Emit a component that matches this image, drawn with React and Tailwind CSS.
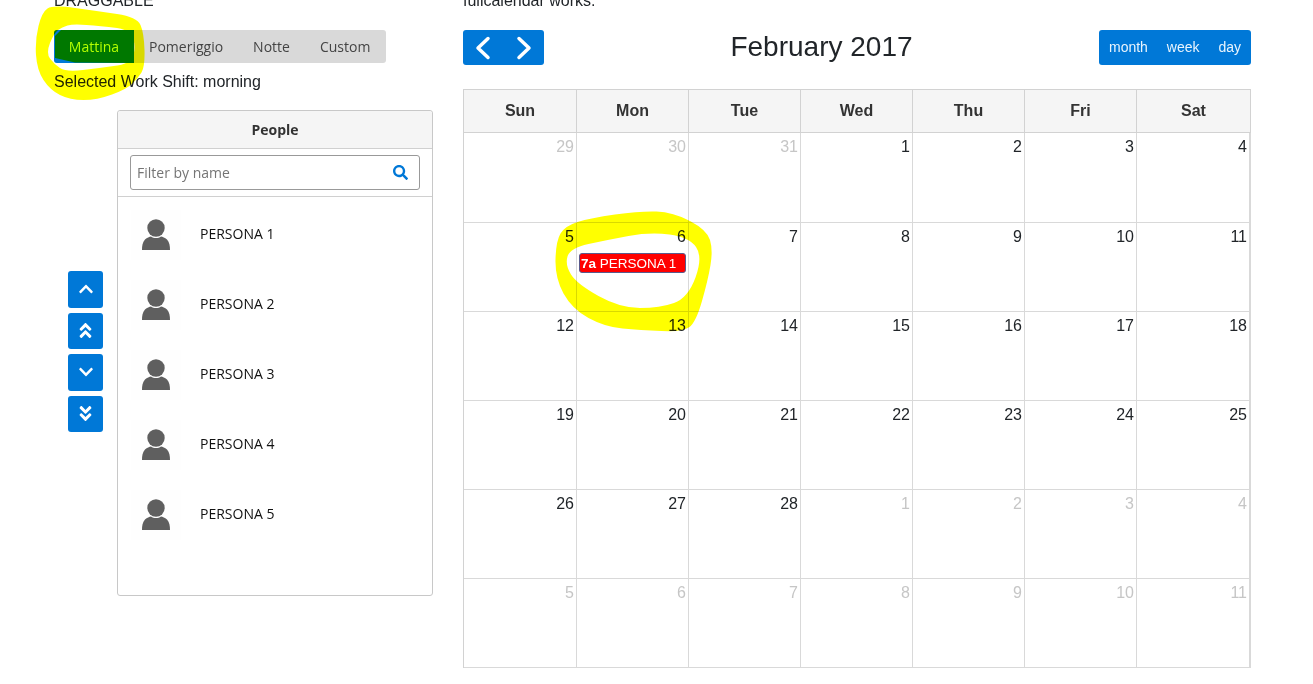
import React from 'react';
import { FaChevronUp, FaChevronDown, FaAngleDoubleUp, FaAngleDoubleDown, FaSearch } from 'react-icons/fa';

const SHIFTS = ['Pomeriggio', 'Notte', 'Custom'];
const PEOPLE = ['PERSONA 1', 'PERSONA 2', 'PERSONA 3', 'PERSONA 4', 'PERSONA 5'];
const DAY_NAMES = ['Sun', 'Mon', 'Tue', 'Wed', 'Thu', 'Fri', 'Sat'];

const CELLS = [
  [29, true], [30, true], [31, true], [1], [2], [3], [4],
  [5], [6], [7], [8], [9], [10], [11],
  [12], [13], [14], [15], [16], [17], [18],
  [19], [20], [21], [22], [23], [24], [25],
  [26], [27], [28], [1, true], [2, true], [3, true], [4, true],
  [5, true], [6, true], [7, true], [8, true], [9, true], [10, true], [11, true],
];

// smooth closed outline through the marker's edge points
const blob = (pts) => {
  const mid = (a, b) => [(a[0] + b[0]) / 2, (a[1] + b[1]) / 2];
  const start = mid(pts[pts.length - 1], pts[0]);
  let d = `M${start[0]} ${start[1]}`;
  pts.forEach((p, i) => {
    const m = mid(p, pts[(i + 1) % pts.length]);
    d += ` Q${p[0]} ${p[1]} ${m[0]} ${m[1]}`;
  });
  return d + 'Z';
};

const RING_TAB_OUTER = [[53, 5], [97, 11], [137, 17], [144, 33], [145, 67], [138, 78], [127, 89], [97, 100], [70, 100], [50, 90], [37, 70], [35, 40], [42, 12]];
const RING_TAB_INNER = [[73, 24], [100, 26], [134, 30], [135, 63], [100, 68], [66, 72], [54, 64], [46, 53], [54, 33], [62, 27]];
const RING_EVENT_OUTER = [[565, 226], [590, 218], [640, 211], [673, 212], [707, 230], [713, 250], [708, 280], [696, 322], [683, 332], [640, 330], [605, 327], [572, 309], [555, 278], [556, 241]];
const RING_EVENT_INNER = [[570, 248], [607, 240], [650, 232], [689, 237], [703, 257], [688, 298], [660, 308], [620, 308], [577, 284], [565, 265]];

const Avatar = () => (
  <div className="w-[50px] h-[50px] bg-[#fefefe] flex items-center justify-center">
    <svg width="30" height="32" viewBox="0 0 30 32">
      <circle cx="15" cy="9" r="8.700" fill="#5f5f5f" />
      <path d="M1 31c0-4 .5-8 3-10.500 2-1.800 4.500-2.800 6-3 1.500 1.200 3 1.600 5 1.600s3.500-.4 5-1.600c1.500.2 4 1.200 6 3 2.500 2.500 3 6.500 3 10.500z" fill="#5f5f5f" />
    </svg>
  </div>
);

const ArrowButton = ({ children }) => (
  <button className="w-[35px] h-[36.5px] bg-[#0078d7] rounded-[3px] text-white text-[16px] flex items-center justify-center">
    {children}
  </button>
);

const App = () => {
  return (
    <div className="relative isolate w-[1313px] h-[684px] overflow-hidden bg-white flex text-[16px] text-[#212529] font-['Liberation_Sans',sans-serif]">
      <div className="ml-[54px] w-[379px] shrink-0">
        <div className="-mt-[11px] h-[24px] leading-[24px] mb-[17px]">DRAGGABLE</div>
        <div className="w-[332px] h-[33px] bg-[#d9d9d9] rounded-[3px] flex items-center text-[14px] text-[#444] font-['Open_Sans',sans-serif]">
          <div className="w-[80px] h-full bg-[#0078d7] rounded-l-[3px] flex items-center justify-center text-[#b4ff30]">Mattina</div>
          {SHIFTS.map((s) => (
            <div key={s} className="px-[15px]">{s}</div>
          ))}
        </div>
        <div className="mt-[7px] h-[24px] leading-[24px]">Selected Work Shift: morning</div>
        <div className="mt-[16px] flex">
          <div className="ml-[14px] w-[35px] mt-[161px] flex flex-col gap-[5px]">
            <ArrowButton><FaChevronUp /></ArrowButton>
            <ArrowButton><FaAngleDoubleUp className="text-[19px]" /></ArrowButton>
            <ArrowButton><FaChevronDown /></ArrowButton>
            <ArrowButton><FaAngleDoubleDown className="text-[19px]" /></ArrowButton>
          </div>
          <div className="ml-[14px] w-[316px] h-[486px] border border-[#c8c8c8] rounded-[3px] font-['Open_Sans',sans-serif]">
            <div className="h-[38px] bg-[#f5f5f5] border-b border-[#d0d0d0] flex items-center justify-center text-[14px] font-bold text-[#333] rounded-t-[3px]">People</div>
            <div className="h-[48px] border-b border-[#d0d0d0] px-[12px] pt-[6px]">
              <div className="h-[35px] border border-[#999] rounded-[3px] flex items-center justify-between pl-[6px] pr-[11px]">
                <span className="text-[14px] text-[#757575]">Filter by name</span>
                <FaSearch className="text-[15px] text-[#0078d7]" />
              </div>
            </div>
            <div className="pt-[3px]">
              {PEOPLE.map((p) => (
                <div key={p} className="h-[70px] flex items-center pl-[13px]">
                  <Avatar />
                  <span className="ml-[19px] mb-[4px] text-[14px] text-[#111]">{p}</span>
                </div>
              ))}
            </div>
          </div>
        </div>
      </div>

      <div className="ml-[30px] w-[788px] shrink-0">
        <div className="-mt-[11px] h-[24px] leading-[24px] mb-[17px]">fullcalendar works.</div>
        <div className="h-[35px] flex items-center justify-between">
          <div className="w-[81px] h-full bg-[#0078d7] rounded-[3px] flex items-center justify-between px-[12px]">
            <svg width="16" height="26" viewBox="0 0 16 26" fill="none" stroke="white" strokeWidth="3.500" strokeLinecap="round" strokeLinejoin="round">
              <path d="M13 3.500 3 13l10 9.500" />
            </svg>
            <svg width="16" height="26" viewBox="0 0 16 26" fill="none" stroke="white" strokeWidth="3.500" strokeLinecap="round" strokeLinejoin="round">
              <path d="M3 3.500 13 13 3 22.500" />
            </svg>
          </div>
          <div className="text-[28px] leading-[35px] mb-[2px] text-[#212529]">February 2017</div>
          <div className="w-[152px] h-full bg-[#0078d7] rounded-[3px] flex items-center justify-between px-[10px] text-[14px] text-[#e8f4fd]">
            <span>month</span>
            <span>week</span>
            <span>day</span>
          </div>
        </div>
        <div className="mt-[24px] w-[788px] border-l border-t border-[#d2d2d2] grid grid-cols-[113px_repeat(5,112px)_114px]">
          {DAY_NAMES.map((d) => (
            <div key={d} className="h-[43px] bg-[#f5f5f5] border-r border-b border-[#d2d2d2] last:border-r-2 flex items-center justify-center font-bold text-[#333]">{d}</div>
          ))}
          {CELLS.map(([n, muted], i) => (
            <div key={i} className={`${i < 7 ? 'h-[90px]' : 'h-[89px]'} border-r border-b border-[#d9d9d9] ${i % 7 === 6 ? 'border-r-2' : ''} pt-[2px]`}>
              <div className={`h-[24px] leading-[24px] text-right pr-[2px] ${muted ? 'text-[#c6c6c6]' : 'text-[#212529]'}`}>{n}</div>
              {i === 8 && (
                <div className="mt-[4px] ml-[2px] w-[107px] h-[20px] pl-px bg-[#ff0000] border border-[#5a5a8c] rounded-[3px] text-white text-[13.500px] leading-[20px] whitespace-nowrap">
                  <b>7a</b> PERSONA 1
                </div>
              )}
            </div>
          ))}
        </div>
      </div>

      {/* marker scribbles drawn over the page */}
      <svg className="absolute inset-0 mix-blend-multiply pointer-events-none" width="1313" height="684" viewBox="0 0 1313 684">
        <path fillRule="evenodd" fill="#ffff00" d={`${blob(RING_TAB_OUTER)} ${blob(RING_TAB_INNER)}`} />
        <path fill="#ffff00" d="M61 30H134V63L75 62.500 55 58V36z" />
        <path fillRule="evenodd" fill="#ffff00" d={`${blob(RING_EVENT_OUTER)} ${blob(RING_EVENT_INNER)}`} />
      </svg>
    </div>
  );
};

export default App;
